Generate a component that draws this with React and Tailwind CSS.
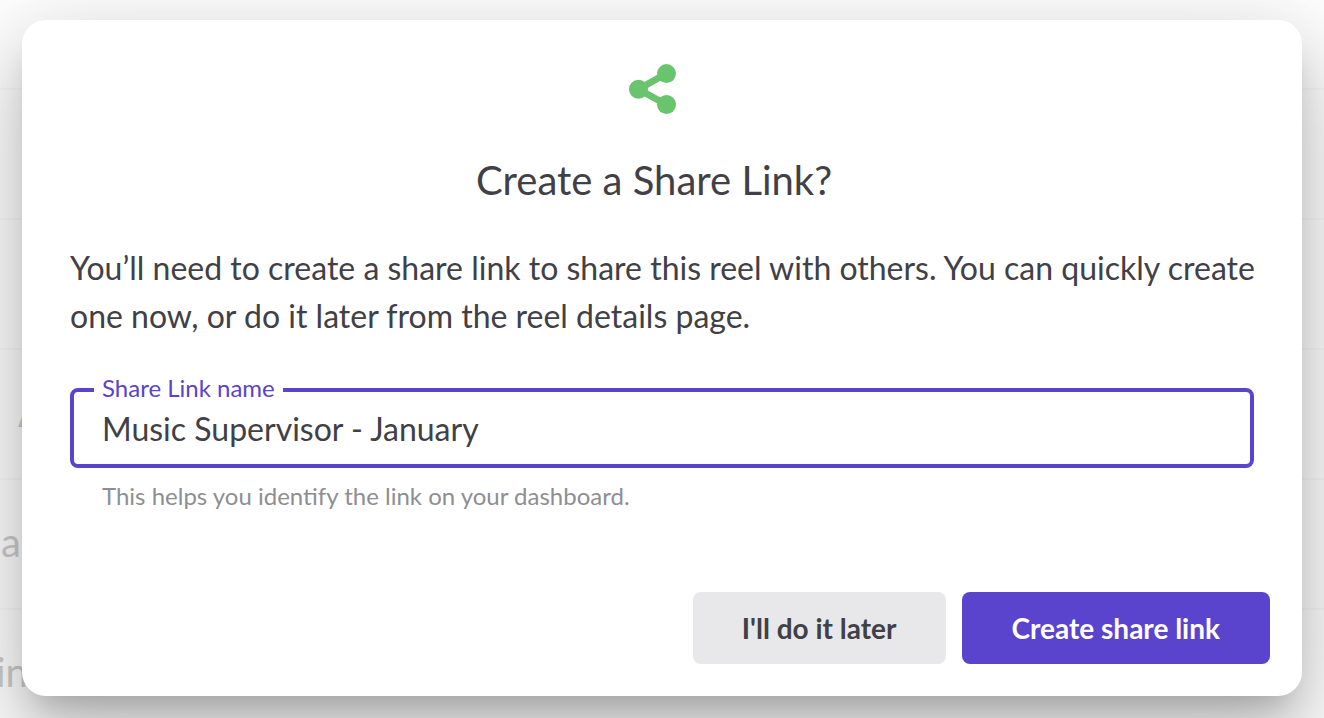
import { useState } from 'react'

const rows = [
  { id: 1, text: '', indent: 'pl-0' },
  { id: 2, text: '', indent: 'pl-0' },
  { id: 3, text: 'A', indent: 'pl-[18px]' },
  { id: 4, text: 'a', indent: 'pl-px' },
  { id: 5, text: 'in', indent: '-ml-1' },
]

function ShareIcon() {
  return (
    <svg width="50" height="50" viewBox="0 0 50 50" fill="#69c46d" aria-hidden="true">
      <path d="M37.5 9.5 9.5 25.3 37.5 40.8" fill="none" stroke="#69c46d" strokeWidth="6.8" />
      <circle cx="9.5" cy="25.3" r="9.5" />
      <circle cx="37.5" cy="9.6" r="9.5" />
      <circle cx="37.5" cy="40.5" r="9.5" />
    </svg>
  )
}

function TrackList() {
  return (
    <div className="absolute inset-0 overflow-hidden pt-[88px]" aria-hidden="true">
      {rows.map((row) => (
        <div
          key={row.id}
          className={`flex h-[130px] items-center border-t-2 border-black/[0.02] pb-1 text-[40px] text-[#cecece] ${row.indent}`}
        >
          {row.text}
        </div>
      ))}
    </div>
  )
}

function ShareLinkDialog() {
  const [name, setName] = useState('Music Supervisor - January')

  return (
    <form
      role="dialog"
      aria-modal="true"
      aria-labelledby="share-title"
      onSubmit={(e) => e.preventDefault()}
      className="relative w-full rounded-3xl bg-white shadow-[0_22px_30px_-14px_rgba(0,0,0,0.2),0_48px_76px_6px_rgba(0,0,0,0.14),0_18px_92px_16px_rgba(0,0,0,0.12)]"
    >
      {/* Header */}
      <div className="flex flex-col items-center pt-11 pr-12 pl-8">
        <ShareIcon />
        <h2 id="share-title" className="mt-[34px] text-[40px] leading-16">
          Create a Share Link?
        </h2>
      </div>

      {/* Body */}
      <div className="px-12 pt-8">
        <p className="-mr-6 text-[32px] leading-12">
          You’ll need to create a share link to share this reel with others. You can quickly create
          one now, or do it later from the reel details page.
        </p>

        <div className="relative mt-12">
          <label
            htmlFor="share-name"
            className="absolute -top-4 left-6 bg-white px-2 text-2xl leading-8 text-[#5a43cd]"
          >
            Share Link name
          </label>
          <input
            id="share-name"
            type="text"
            value={name}
            onChange={(e) => setName(e.target.value)}
            aria-describedby="share-help"
            className="block h-20 w-full rounded-lg border-4 border-[#5a43cd] bg-white px-7 text-[32px] outline-none"
          />
        </div>
        <p id="share-help" className="mt-3 px-8 text-2xl leading-8 text-[#8e8e92]">
          This helps you identify the link on your dashboard.
        </p>
      </div>

      {/* Actions */}
      <div className="flex justify-end gap-4 px-8 pt-20 pb-8">
        <button type="button" className="h-18 rounded-lg bg-[#e8e8ea] px-[49px] text-[28px] font-bold">
          I'll do it later
        </button>
        <button type="submit" className="h-18 rounded-lg bg-[#5a43cd] px-[50px] text-[28px] font-bold text-white">
          Create share link
        </button>
      </div>
    </form>
  )
}

export default function App() {
  return (
    <div className="relative min-h-screen overflow-hidden bg-white px-[22px] pt-5 font-[Lato,sans-serif] text-[#414046]">
      <TrackList />
      <ShareLinkDialog />
    </div>
  )
}
